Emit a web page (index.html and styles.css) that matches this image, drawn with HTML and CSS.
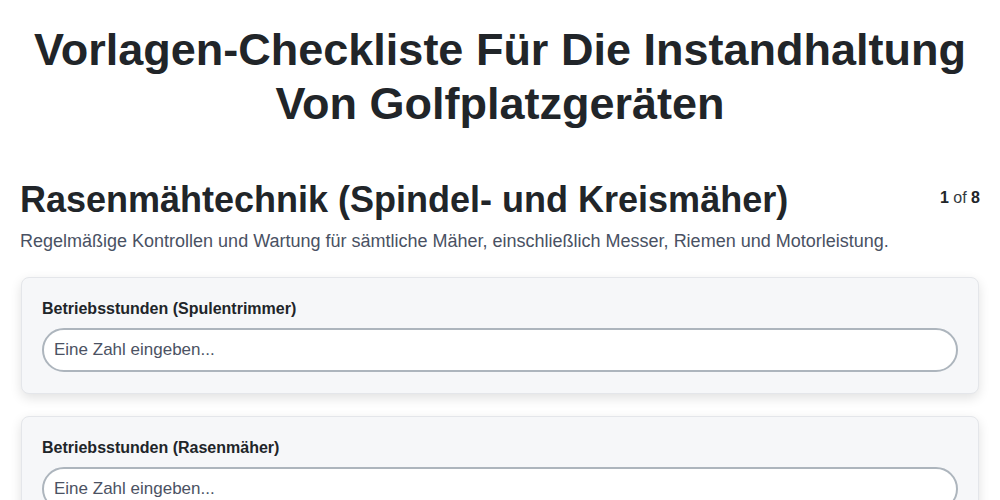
FILE: index.html
```html
<!DOCTYPE html>
<html lang="de">
<head>
<meta charset="utf-8">
<link rel="stylesheet" href="styles.css">
</head>
<body>
<main class="page">
  <h1 class="title">Vorlagen-Checkliste Für Die Instandhaltung Von Golfplatzgeräten</h1>
  <section class="section">
    <div class="section-head">
      <h2 class="section-title">Rasenmähtechnik (Spindel- und Kreismäher)</h2>
      <div class="pager"><b>1</b> of <b>8</b></div>
    </div>
    <p class="section-desc">Regelmäßige Kontrollen und Wartung für sämtliche Mäher, einschließlich Messer, Riemen und Motorleistung.</p>
    <div class="fields">
      <div class="card">
        <label class="label">Betriebsstunden (Spulentrimmer)</label>
        <input class="input" type="text" placeholder="Eine Zahl eingeben...">
      </div>
      <div class="card">
        <label class="label">Betriebsstunden (Rasenmäher)</label>
        <input class="input" type="text" placeholder="Eine Zahl eingeben...">
      </div>
    </div>
  </section>
</main>
</body>
</html>
```
FILE: styles.css
```css
* { box-sizing: border-box; }
html, body { margin: 0; padding: 0; background: #fff; }
body {
  font-family: "Liberation Sans", Arial, sans-serif;
  color: #212529;
}
.page {
  padding: 23px 20px 20px;
}
.title {
  margin: 0;
  text-align: center;
  font-size: 45px;
  line-height: 54px;
  font-weight: 700;
  color: #212529;
}
.section {
  margin-top: 48px;
}
.section-head {
  display: flex;
  justify-content: space-between;
  align-items: flex-start;
}
.section-title {
  margin: 0;
  font-size: 36px;
  line-height: 42px;
  font-weight: 700;
}
.pager {
  font-size: 16px;
  color: #343a40;
  padding-top: 10px;
}
.pager b { color: #212529; }
.section-desc {
  margin: 8px 0 0;
  font-size: 18px;
  line-height: 24px;
  color: #495163;
}
.fields {
  margin-top: 24px;
  display: flex;
  flex-direction: column;
  gap: 22px;
}
.card {
  margin: 0 1px;
  background: #f6f7f9;
  border: 1px solid #e4e6ea;
  border-radius: 8px;
  box-shadow: 0 4px 12px rgba(0, 0, 0, 0.12);
  padding: 21px 20px 21px;
  display: flex;
  flex-direction: column;
}
.label {
  font-size: 16px;
  line-height: 20px;
  font-weight: 700;
  color: #212529;
  margin-bottom: 9px;
}
.input {
  width: 100%;
  height: 44px;
  border: 2px solid #adb5bd;
  border-radius: 22px;
  background: #fff;
  padding: 0 10px;
  font-family: "Liberation Sans", Arial, sans-serif;
  font-size: 17px;
  color: #212529;
  outline: none;
}
.input::placeholder { color: #4b5263; }
```
